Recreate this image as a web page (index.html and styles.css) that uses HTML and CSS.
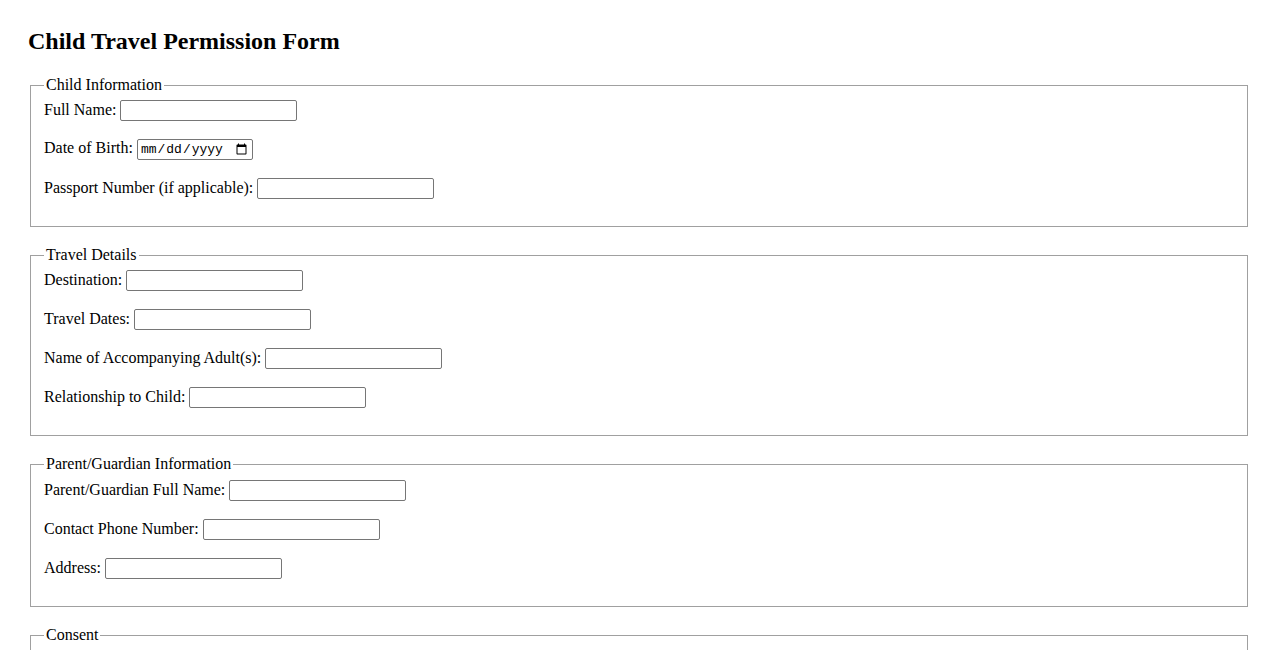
FILE: index.html
```html
<!DOCTYPE html>
<html lang="en">
<head>
<meta charset="utf-8">
<title>Child Travel Permission Form</title>
<link rel="stylesheet" href="styles.css">
</head>
<body>
<h1 class="title">Child Travel Permission Form</h1>
<form class="form">
  <fieldset class="section">
    <legend class="legend">Child Information</legend>
    <div class="row"><label for="child-name">Full Name:</label> <input class="text" type="text" id="child-name"></div>
    <div class="row"><label for="dob">Date of Birth:</label> <input class="date" type="date" id="dob"></div>
    <div class="row"><label for="passport">Passport Number (if applicable):</label> <input class="text" type="text" id="passport"></div>
  </fieldset>
  <fieldset class="section">
    <legend class="legend">Travel Details</legend>
    <div class="row"><label for="dest">Destination:</label> <input class="text" type="text" id="dest"></div>
    <div class="row"><label for="dates">Travel Dates:</label> <input class="text" type="text" id="dates"></div>
    <div class="row"><label for="adult">Name of Accompanying Adult(s):</label> <input class="text" type="text" id="adult"></div>
    <div class="row"><label for="rel">Relationship to Child:</label> <input class="text" type="text" id="rel"></div>
  </fieldset>
  <fieldset class="section section-tall">
    <legend class="legend">Parent/Guardian Information</legend>
    <div class="row"><label for="pname">Parent/Guardian Full Name:</label> <input class="text" type="text" id="pname"></div>
    <div class="row"><label for="phone">Contact Phone Number:</label> <input class="text" type="text" id="phone"></div>
    <div class="row"><label for="addr">Address:</label> <input class="text" type="text" id="addr"></div>
  </fieldset>
  <fieldset class="section">
    <legend class="legend">Consent</legend>
    <div class="row"><input type="checkbox" id="consent"> <label for="consent">I hereby give permission for my child to travel as described above.</label></div>
    <div class="row"><label for="sig">Signature:</label> <input class="text" type="text" id="sig"></div>
    <div class="row"><label for="sdate">Date:</label> <input class="date" type="date" id="sdate"></div>
  </fieldset>
  <button class="submit" type="submit">Submit</button>
</form>
</body>
</html>
```
FILE: styles.css
```css
body {
  margin: 0;
  padding: 28px;
  font-family: "Liberation Serif", "Times New Roman", serif;
  font-size: 16px;
  color: #000;
  background: #fff;
}
.title {
  font-size: 24px;
  font-weight: bold;
  margin: 0 0 21px;
  line-height: 27px;
}
.section {
  margin: 0 2px 19px;
  border: 1px solid #a0a0a0;
  padding: 6px 13px 9px;
}
.section-tall {
  padding-top: 7px;
}
.legend {
  padding: 0 2px;
}
.row {
  margin-bottom: 18px;
}
.text {
  box-sizing: border-box;
  width: 177px;
  height: 21px;
  border: 1px solid #767676;
  border-radius: 2px;
  padding: 1px 2px;
  font-family: "Liberation Sans", Arial, sans-serif;
  font-size: 13.33px;
}
.date {
  box-sizing: border-box;
  width: 116px;
  height: 21px;
  border: 1px solid #767676;
  border-radius: 2px;
  padding: 1px 2px;
  font-family: "Liberation Mono", "Courier New", monospace;
  font-size: 13px;
}
.submit {
  font-size: 13.33px;
}
```
